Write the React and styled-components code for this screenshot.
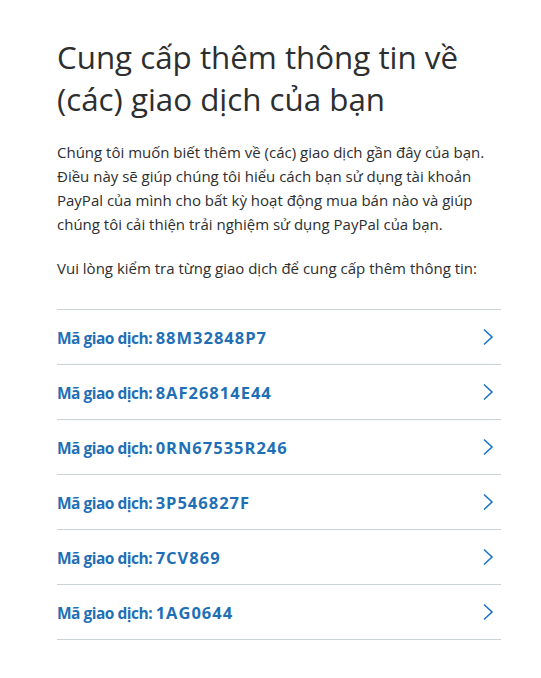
import React from 'react';
import styled, { createGlobalStyle } from 'styled-components';

const GlobalStyle = createGlobalStyle`
  body {
    margin: 0;
    background: #ffffff;
    font-family: "Open Sans", "Noto Sans", sans-serif;
    color: #2c2e2f;
  }
`;

const Page = styled.div`
  width: 444px;
  padding: 36px 0 0 57px;
`;

const Title = styled.h1`
  margin: 0 0 20px;
  font-size: 31.3px;
  line-height: 42px;
  font-weight: 500;
  color: #2c2e2f;
`;

const Paragraph = styled.p`
  margin: 0 0 20px;
  font-size: 15px;
  line-height: 24px;
  color: #2c2e2f;
`;

const List = styled.ul`
  list-style: none;
  margin: 29px 0 0;
  padding: 0;
  border-top: 1px solid #cbd2d6;
`;

const Row = styled.li`
  display: flex;
  align-items: center;
  justify-content: space-between;
  height: 54px;
  border-bottom: 1px solid #cbd2d6;
  cursor: pointer;
`;

const RowLabel = styled.span`
  font-size: 15.5px;
  font-weight: 700;
  letter-spacing: -0.5px;
  color: #1f6fb7;
`;

const TxId = styled.span`
  font-size: 16.5px;
  letter-spacing: 1px;
`;

const Chevron = styled.svg`
  width: 14px;
  height: 18px;
  margin-right: 6px;
  flex: none;
`;

const transactions = [
  '88M32848P7',
  '8AF26814E44',
  '0RN67535R246',
  '3P546827F',
  '7CV869',
  '1AG0644',
];

export default function App() {
  return (
    <>
      <GlobalStyle />
      <Page>
        <Title>Cung cấp thêm thông tin về (các) giao dịch của bạn</Title>
        <Paragraph>
          Chúng tôi muốn biết thêm về (các) giao dịch gần đây của bạn. Điều này sẽ giúp chúng tôi hiểu cách bạn sử dụng tài khoản PayPal của mình cho bất kỳ hoạt động mua bán nào và giúp chúng tôi cải thiện trải nghiệm sử dụng PayPal của bạn.
        </Paragraph>
        <Paragraph>Vui lòng kiểm tra từng giao dịch để cung cấp thêm thông tin:</Paragraph>
        <List>
          {transactions.map((id) => (
            <Row key={id}>
              <RowLabel>
                Mã giao dịch: <TxId>{id}</TxId>
              </RowLabel>
              <Chevron viewBox="0 0 14 18">
                <path d="M3 1.5 L11 9 L3 16.5" fill="none" stroke="#1b74c9" strokeWidth="1.6" />
              </Chevron>
            </Row>
          ))}
        </List>
      </Page>
    </>
  );
}
